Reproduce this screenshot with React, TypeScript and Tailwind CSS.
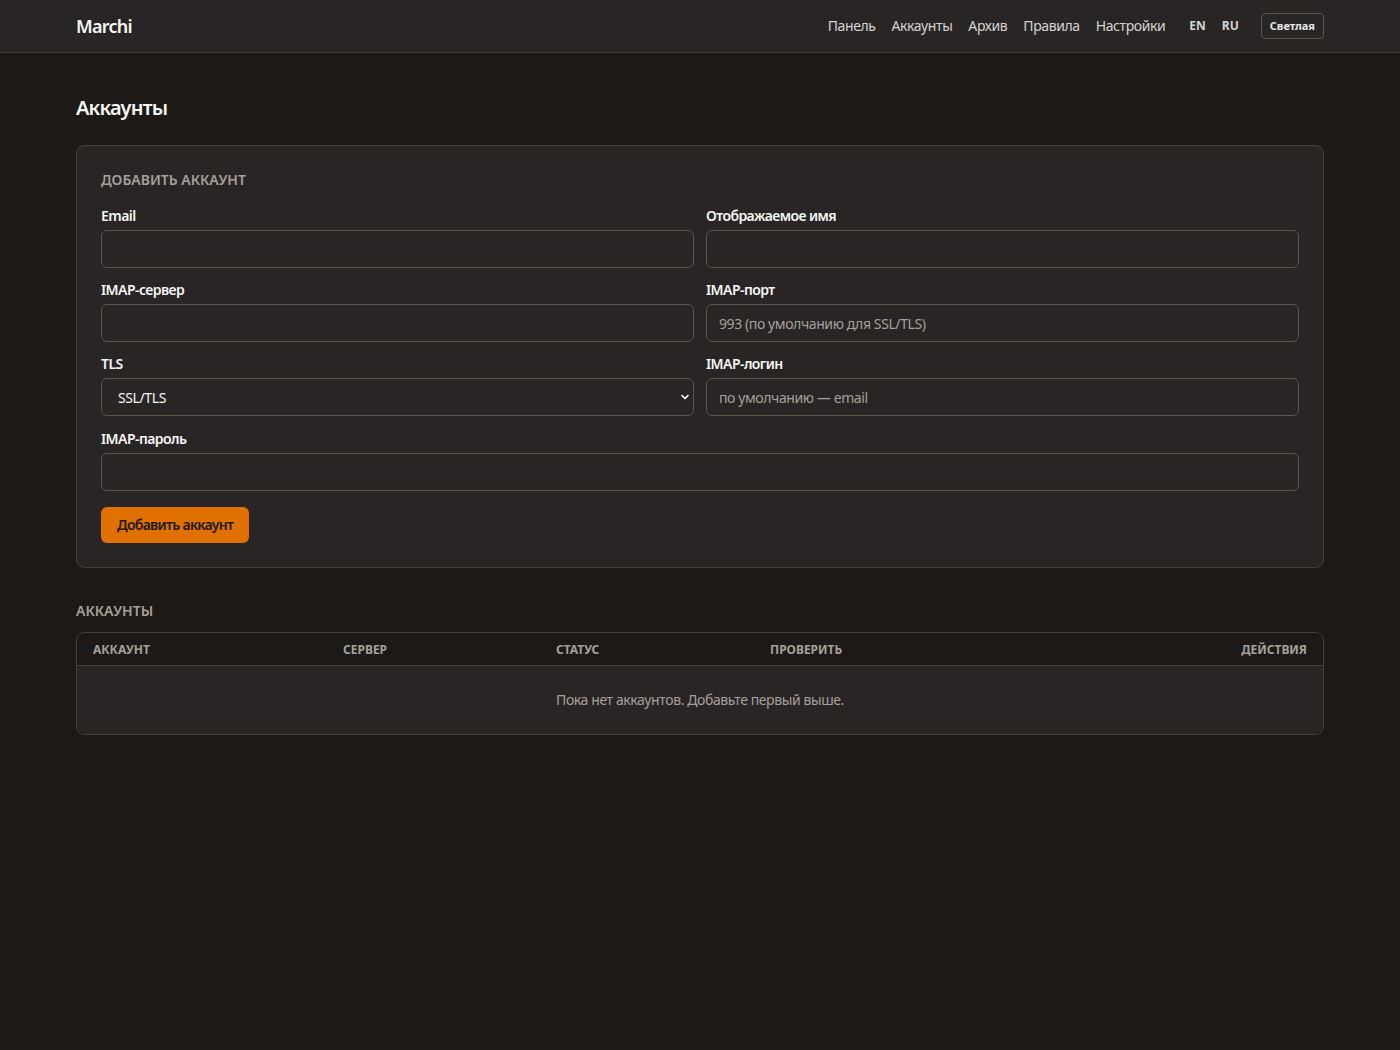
import { ChevronDown } from 'lucide-react'

const font = { fontFamily: '"Noto Sans", "Open Sans", sans-serif' }

function Field({ label, placeholder }: { label: string; placeholder?: string }) {
  return (
    <label className="flex flex-col gap-1">
      <span className="text-sm font-semibold leading-5 tracking-[-0.04em] text-stone-100">{label}</span>
      <input
        placeholder={placeholder}
        className="h-[38px] rounded-md border border-stone-600 bg-[#292524] px-3 text-sm text-stone-100 placeholder:text-stone-400 outline-none"
      />
    </label>
  )
}

export default function App() {
  const nav = ['Панель', 'Аккаунты', 'Архив', 'Правила', 'Настройки']
  return (
    <div style={font} className="min-h-[1050px] bg-[#1c1917] tracking-tight text-stone-100">
      <header className="h-[53px] border-b border-stone-700 bg-[#292524]">
        <div className="mx-auto flex h-[52px] max-w-[1248px] items-center justify-between">
          <span className="text-lg font-semibold tracking-[-0.04em] text-stone-100">Marchi</span>
          <div className="flex items-center">
            <nav className="flex items-center gap-4 text-sm text-stone-300">
              {nav.map((n) => (
                <a key={n}>{n}</a>
              ))}
            </nav>
            <div className="ml-[24px] flex items-center gap-4 text-xs font-bold tracking-normal text-stone-300">
              <span>EN</span>
              <span>RU</span>
            </div>
            <button className="ml-[22px] h-[26px] rounded border border-stone-600 px-2 text-[11px] font-bold tracking-normal text-stone-200">
              Светлая
            </button>
          </div>
        </div>
      </header>

      <main className="mx-auto max-w-[1248px] pt-[41px]">
        <h1 className="text-xl font-semibold leading-7 tracking-[-0.04em]">Аккаунты</h1>

        <section className="mt-[23px] rounded-lg border border-stone-700 bg-[#292524] p-6">
          <h2 className="text-sm font-semibold uppercase leading-5 tracking-normal text-stone-400">
            Добавить аккаунт
          </h2>
          <div className="mt-4 grid grid-cols-2 gap-x-3 gap-y-3">
            <Field label="Email" />
            <Field label="Отображаемое имя" />
            <Field label="IMAP-сервер" />
            <Field label="IMAP-порт" placeholder="993 (по умолчанию для SSL/TLS)" />
            <label className="flex flex-col gap-1 pb-px">
              <span className="text-sm font-semibold leading-5 tracking-[-0.04em] text-stone-100">TLS</span>
              <div className="relative">
                <select className="h-[38px] w-full appearance-none rounded-md border border-stone-600 bg-[#292524] px-4 pt-px text-sm text-stone-100 outline-none">
                  <option>SSL/TLS</option>
                  <option>STARTTLS</option>
                  <option>Нет</option>
                </select>
                <ChevronDown
                  size={12}
                  strokeWidth={3.5}
                  className="pointer-events-none absolute right-[3px] top-1/2 -translate-y-1/2 text-stone-100"
                />
              </div>
            </label>
            <div className="pb-px">
              <Field label="IMAP-логин" placeholder="по умолчанию — email" />
            </div>
            <div className="col-span-2">
              <Field label="IMAP-пароль" />
            </div>
          </div>
          <button className="mt-4 h-9 rounded-md bg-[#e07000] px-4 text-sm font-semibold tracking-[-0.05em] text-stone-900">
            Добавить аккаунт
          </button>
        </section>

        <h2 className="mt-[33px] text-sm font-semibold uppercase leading-5 tracking-normal text-stone-400">
          Аккаунты
        </h2>
        <div className="mt-[11px] overflow-hidden rounded-lg border border-stone-700">
          <div className="grid h-[33px] grid-cols-[250px_213px_214px_1fr_auto] items-center border-b border-stone-700 bg-[#1c1917] px-4 pt-0.5 text-xs font-bold uppercase tracking-normal text-stone-400">
            <span>Аккаунт</span>
            <span>Сервер</span>
            <span>Статус</span>
            <span>Проверить</span>
            <span>Действия</span>
          </div>
          <div className="flex h-[68px] items-center justify-center bg-[#292524] text-sm text-stone-400">
            Пока нет аккаунтов. Добавьте первый выше.
          </div>
        </div>
      </main>
    </div>
  )
}
